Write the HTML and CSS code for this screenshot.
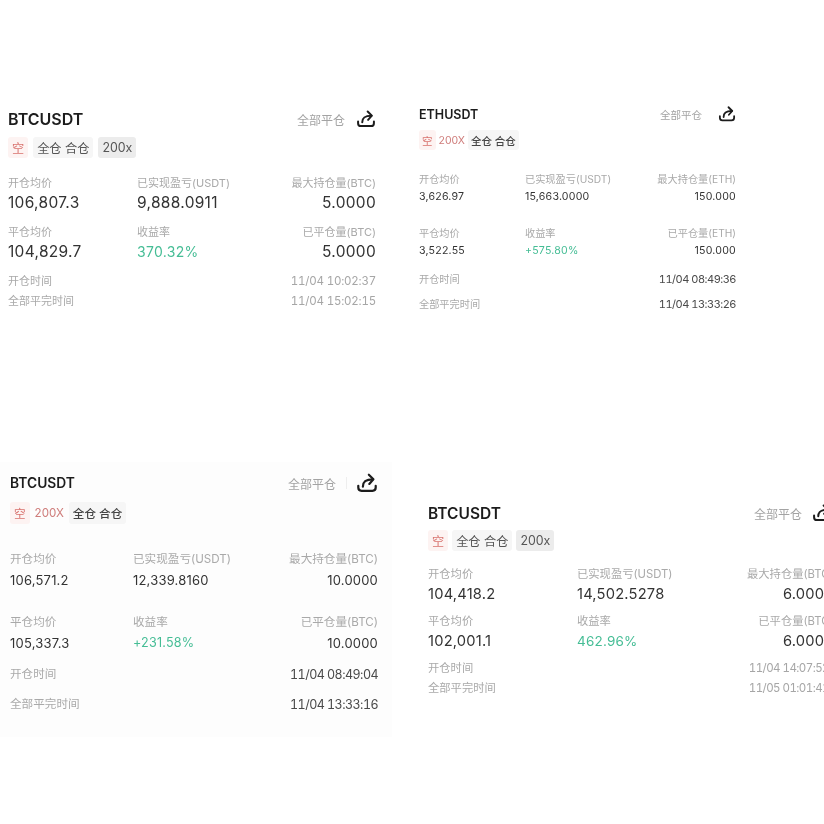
FILE: index.html
```html
<!DOCTYPE html>
<html lang="en">
<head>
    <meta charset="UTF-8">
    <meta name="viewport" content="width=device-width, initial-scale=1.0">
    <title>Positions</title>
    <link rel="stylesheet" href="styles.css">
</head>
<body>
<div class="page">

    <div class="cell">
        <div class="card card-a">
            <div class="card-head">
                <div class="symbol">BTCUSDT</div>
                <div class="close-all">全部平仓</div>
                <svg class="share" viewBox="0 0 24 24"><path d="M2.5 15V17C2.5 19.5 4 20.5 6 20.5H18C20 20.5 21.5 19.5 21.5 17V15"/><path d="M7.5 16C7.5 10.5 10.5 8 18.5 8"/><path d="M14 3L19 8L14.5 13"/></svg>
            </div>
            <div class="tags">
                <span class="tag tag-short">空</span>
                <span class="tag tag-mode">全仓 合仓</span>
                <span class="tag tag-lev">200x</span>
            </div>
            <div class="stats">
                <div class="stat"><div class="label">开仓均价</div><div class="value">106,807.3</div></div>
                <div class="stat"><div class="label">已实现盈亏(USDT)</div><div class="value">9,888.0911</div></div>
                <div class="stat right"><div class="label">最大持仓量(BTC)</div><div class="value">5.0000</div></div>
                <div class="stat"><div class="label">平仓均价</div><div class="value">104,829.7</div></div>
                <div class="stat"><div class="label">收益率</div><div class="value green">370.32%</div></div>
                <div class="stat right"><div class="label">已平仓量(BTC)</div><div class="value">5.0000</div></div>
            </div>
            <div class="times">
                <div class="time-row"><span class="label">开仓时间</span><span class="time">11/04 10:02:37</span></div>
                <div class="time-row"><span class="label">全部平完时间</span><span class="time">11/04 15:02:15</span></div>
            </div>
        </div>
    </div>

    <div class="cell">
        <div class="card card-b">
            <div class="card-head">
                <div class="symbol">ETHUSDT</div>
                <div class="close-all">全部平仓</div>
                <svg class="share" viewBox="0 0 24 24"><path d="M2.5 15V17C2.5 19.5 4 20.5 6 20.5H18C20 20.5 21.5 19.5 21.5 17V15"/><path d="M7.5 16C7.5 10.5 10.5 8 18.5 8"/><path d="M14 3L19 8L14.5 13"/></svg>
            </div>
            <div class="tags">
                <span class="tag tag-short">空</span>
                <span class="tag-red">200X</span>
                <span class="tag tag-mode">全仓 合仓</span>
            </div>
            <div class="stats">
                <div class="stat"><div class="label">开仓均价</div><div class="value">3,626.97</div></div>
                <div class="stat"><div class="label">已实现盈亏(USDT)</div><div class="value">15,663.0000</div></div>
                <div class="stat right"><div class="label">最大持仓量(ETH)</div><div class="value">150.000</div></div>
                <div class="stat"><div class="label">平仓均价</div><div class="value">3,522.55</div></div>
                <div class="stat"><div class="label">收益率</div><div class="value green">+575.80%</div></div>
                <div class="stat right"><div class="label">已平仓量(ETH)</div><div class="value">150.000</div></div>
            </div>
            <div class="times">
                <div class="time-row"><span class="label">开仓时间</span><span class="time">11/04 08:49:36</span></div>
                <div class="time-row"><span class="label">全部平完时间</span><span class="time">11/04 13:33:26</span></div>
            </div>
        </div>
    </div>

    <div class="cell cell-tint">
        <div class="card card-c">
            <div class="card-head">
                <div class="symbol">BTCUSDT</div>
                <div class="close-all">全部平仓</div>
                <span class="divider"></span>
                <svg class="share" viewBox="0 0 24 24"><path d="M2.5 15V17C2.5 19.5 4 20.5 6 20.5H18C20 20.5 21.5 19.5 21.5 17V15"/><path d="M7.5 16C7.5 10.5 10.5 8 18.5 8"/><path d="M14 3L19 8L14.5 13"/></svg>
            </div>
            <div class="tags">
                <span class="tag tag-short">空</span>
                <span class="tag-red">200X</span>
                <span class="tag tag-mode">全仓 合仓</span>
            </div>
            <div class="stats">
                <div class="stat"><div class="label">开仓均价</div><div class="value">106,571.2</div></div>
                <div class="stat"><div class="label">已实现盈亏(USDT)</div><div class="value">12,339.8160</div></div>
                <div class="stat right"><div class="label">最大持仓量(BTC)</div><div class="value">10.0000</div></div>
                <div class="stat"><div class="label">平仓均价</div><div class="value">105,337.3</div></div>
                <div class="stat"><div class="label">收益率</div><div class="value green">+231.58%</div></div>
                <div class="stat right"><div class="label">已平仓量(BTC)</div><div class="value">10.0000</div></div>
            </div>
            <div class="times">
                <div class="time-row"><span class="label">开仓时间</span><span class="time">11/04 08:49:04</span></div>
                <div class="time-row"><span class="label">全部平完时间</span><span class="time">11/04 13:33:16</span></div>
            </div>
        </div>
    </div>

    <div class="cell">
        <div class="card card-d">
            <div class="card-head">
                <div class="symbol">BTCUSDT</div>
                <div class="close-all">全部平仓</div>
                <svg class="share" viewBox="0 0 24 24"><path d="M2.5 15V17C2.5 19.5 4 20.5 6 20.5H18C20 20.5 21.5 19.5 21.5 17V15"/><path d="M7.5 16C7.5 10.5 10.5 8 18.5 8"/><path d="M14 3L19 8L14.5 13"/></svg>
            </div>
            <div class="tags">
                <span class="tag tag-short">空</span>
                <span class="tag tag-mode">全仓 合仓</span>
                <span class="tag tag-lev">200x</span>
            </div>
            <div class="stats">
                <div class="stat"><div class="label">开仓均价</div><div class="value">104,418.2</div></div>
                <div class="stat"><div class="label">已实现盈亏(USDT)</div><div class="value">14,502.5278</div></div>
                <div class="stat right"><div class="label">最大持仓量(BTC)</div><div class="value">6.0000</div></div>
                <div class="stat"><div class="label">平仓均价</div><div class="value">102,001.1</div></div>
                <div class="stat"><div class="label">收益率</div><div class="value green">462.96%</div></div>
                <div class="stat right"><div class="label">已平仓量(BTC)</div><div class="value">6.0000</div></div>
            </div>
            <div class="times">
                <div class="time-row"><span class="label">开仓时间</span><span class="time">11/04 14:07:52</span></div>
                <div class="time-row"><span class="label">全部平完时间</span><span class="time">11/05 01:01:41</span></div>
            </div>
        </div>
    </div>

</div>
</body>
</html>
```

FILE: styles.css
```css
html, body {
    margin: 0;
    padding: 0;
    background-color: #fff;
    font-family: Inter, "Noto Sans CJK SC", sans-serif;
    overflow: hidden;
}

/* Four screenshots pasted in a 2x2 collage */
.page {
    width: 824px;
    height: 824px;
    display: grid;
    grid-template-columns: 392px 432px;
    grid-template-rows: 462px 362px;
    overflow: hidden;
    filter: blur(0.5px);
}

.cell {
    min-width: 0;
}

.cell-tint {
    height: 275px;
    background-color: #fdfdfd;
}

.card {
    box-sizing: border-box;
}

.card-a {
    width: 368px;
    margin: 108px 0 0 8px;
    --symbol-size: 16px;
    --head-h: 22px;
    --head-gap: 7px;
    --tags-h: 21px;
    --tags-mb: 17px;
    --tags-gap: 5px;
    --tag-pad: 4px;
    --tag-size: 12.2px;
    --tag-weight: 400;
    --tag-color: #555;
    --label-size: 11px;
    --value-size: 15.5px;
    --value-ls: 0.3px;
    --green-size: 14px;
    --label-h: 16px;
    --value-h: 24px;
    --stat-gap: 9px;
    --col-2: 129px;
    --col-2-w: 150px;
    --time-row: 20px;
    --times-mt: 7px;
    --time-size: 11.5px;
    --time-color: #a6a6a6;
    --time-ls: -0.2px;
    --close-size: 12px;
    --close-gap: 11px;
    --share-size: 20px;
    --head-out: 0;
}

.card-b {
    width: 317px;
    margin: 104px 0 0 27px;
    --symbol-size: 12.5px;
    --head-h: 20px;
    --head-gap: 6px;
    --tags-h: 20px;
    --tags-mb: 21px;
    --tags-gap: 3px;
    --tag-pad: 3px;
    --tag-size: 10.5px;
    --tag-weight: 500;
    --tag-color: #444;
    --label-size: 10.2px;
    --value-size: 10.6px;
    --value-ls: 0.2px;
    --green-size: 10.6px;
    --label-h: 16px;
    --value-h: 20px;
    --stat-gap: 18px;
    --col-2: 106px;
    --col-2-w: 130px;
    --time-row: 25px;
    --times-mt: 5px;
    --time-size: 11px;
    --time-color: #4a4a4a;
    --time-ls: -0.5px;
    --close-size: 10.5px;
    --close-gap: 16px;
    --share-size: 18px;
    --head-out: 0;
}

.card-c {
    width: 368px;
    margin: 9px 0 0 10px;
    --symbol-size: 13.8px;
    --head-h: 24px;
    --head-gap: 7px;
    --tags-h: 22px;
    --tags-mb: 26px;
    --tags-gap: 5px;
    --tag-pad: 4px;
    --tag-size: 11.6px;
    --tag-weight: 500;
    --tag-color: #444;
    --label-size: 11.6px;
    --value-size: 13px;
    --value-ls: 0.2px;
    --green-size: 12.6px;
    --label-h: 18px;
    --value-h: 24px;
    --stat-gap: 21px;
    --col-2: 123px;
    --col-2-w: 150px;
    --time-row: 30px;
    --times-mt: 4px;
    --time-size: 12.5px;
    --time-color: #4a4a4a;
    --time-ls: -0.55px;
    --close-size: 12px;
    --close-gap: 10px;
    --share-size: 22px;
    --head-out: 0;
}

.card-d {
    width: 401px;
    margin: 40px 0 0 36px;
    --symbol-size: 15.5px;
    --head-h: 22px;
    --head-gap: 6px;
    --tags-h: 21px;
    --tags-mb: 15px;
    --tags-gap: 4px;
    --tag-pad: 4px;
    --tag-size: 12.2px;
    --tag-weight: 400;
    --tag-color: #555;
    --label-size: 11.3px;
    --value-size: 14.7px;
    --value-ls: 0.2px;
    --green-size: 13.5px;
    --label-h: 16px;
    --value-h: 24px;
    --stat-gap: 7px;
    --col-2: 149px;
    --col-2-w: 170px;
    --time-row: 20px;
    --times-mt: 5px;
    --time-size: 11.5px;
    --time-color: #a6a6a6;
    --time-ls: -0.55px;
    --close-size: 12px;
    --close-gap: 10px;
    --share-size: 20px;
    --head-out: -3px;
}

.card-head {
    display: flex;
    align-items: center;
    height: var(--head-h);
    margin-bottom: var(--head-gap);
    margin-right: var(--head-out);
}

.symbol {
    flex: 1;
    font-size: var(--symbol-size);
    font-weight: 600;
    color: #1c1c1c;
}

.close-all {
    font-size: var(--close-size);
    color: #a3a3a3;
    margin-right: var(--close-gap);
}

.divider {
    width: 1px;
    height: 12px;
    background-color: #eee;
    margin-right: 9px;
}

.share {
    width: var(--share-size);
    height: var(--share-size);
    fill: none;
    stroke: #1c1c1c;
    stroke-width: 2.4;
    stroke-linecap: round;
    stroke-linejoin: round;
}

.tags {
    display: flex;
    align-items: center;
    gap: var(--tags-gap);
    height: var(--tags-h);
    margin-bottom: var(--tags-mb);
}

.tag {
    display: flex;
    align-items: center;
    height: 100%;
    padding: 0 var(--tag-pad);
    border-radius: 3px;
    font-size: var(--tag-size);
    font-weight: var(--tag-weight);
    color: var(--tag-color);
    background-color: #f6f6f6;
}

.tag-short {
    font-weight: 400;
    color: #d9736f;
    background-color: #fdf3f2;
}

.tag-lev {
    font-size: 12.4px;
    background-color: #ececec;
}

.tag-red {
    font-size: var(--tag-size);
    color: #cf7d7b;
}

.stats {
    display: grid;
    grid-template-columns: var(--col-2) var(--col-2-w) 1fr;
    row-gap: var(--stat-gap);
}

.stat.right {
    text-align: right;
}

.label {
    height: var(--label-h);
    line-height: var(--label-h);
    font-size: var(--label-size);
    color: #a9a9a9;
    white-space: nowrap;
}

.value {
    height: var(--value-h);
    line-height: var(--value-h);
    font-size: var(--value-size);
    letter-spacing: var(--value-ls);
    color: #333;
    white-space: nowrap;
}

.value.green {
    font-size: var(--green-size);
    color: #45bd95;
}

.times {
    margin-top: var(--times-mt);
}

.time-row {
    display: flex;
    justify-content: space-between;
    align-items: center;
    height: var(--time-row);
}

.time {
    font-size: var(--time-size);
    letter-spacing: var(--time-ls);
    font-variant-numeric: tabular-nums;
    color: var(--time-color);
}
```
